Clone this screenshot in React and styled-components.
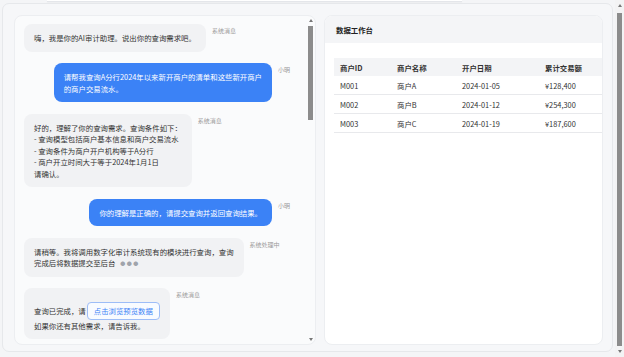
import React from 'react';
import styled, {createGlobalStyle} from 'styled-components';

const GlobalStyle = createGlobalStyle`
  html {
    overflow-y: scroll;
  }
  body {
    margin: 0;
    background: #f4f5f7;
    font-family: "Noto Sans CJK SC", "Noto Sans", sans-serif;
    color: #333;
  }
`

const Page = styled.div`
  display: grid;
  grid-template-columns: 615px 9px;
  height: 357px;
  overflow: hidden;
`

const PageMain = styled.div`
  min-width: 0;
`

// scrollbars are drawn by hand, the browser hides its own in the screenshot
const ScrollTrack = styled.div`
  width: 9px;
  height: ${p => p.$h}px;
  display: flex;
  flex-direction: column;
  align-items: center;
  background: ${p => p.$bg || 'transparent'};
`

const ArrowBox = styled.div`
  height: ${p => p.$h}px;
  width: 100%;
  flex: none;
  display: flex;
  align-items: center;
  justify-content: center;
`

const Arrow = styled.span`
  width: 0;
  height: 0;
  border-left: 2.5px solid transparent;
  border-right: 2.5px solid transparent;
  ${p => p.$down ? 'border-top' : 'border-bottom'}: 3px solid #777;
`

const Thumb = styled.div`
  width: 5px;
  flex: none;
  height: ${p => p.$h}px;
  margin-top: ${p => p.$top}px;
  background: #8c8c8c;
`

const Spacer = styled.div`
  flex: 1;
`

const TopStrip = styled.div`
  margin-left: 47px;
  width: 415px;
  height: 1px;
  background: #fff;
  border-bottom: 1px solid #e4e6ea;
  box-shadow: 0 1px 2px rgba(0, 0, 0, 0.04);
`

const Shell = styled.div`
  margin: 1px 2px 0 2px;
  border: 1px solid #e6e8eb;
  border-radius: 7px;
  background: #f6f7f9;
  padding: 11px 9px 6px 11px;
  display: grid;
  grid-template-columns: 302px 279px;
  gap: 8px;
`

const Panel = styled.section`
  height: 330px;
  box-sizing: border-box;
  border: 1px solid #eceef1;
  border-radius: 8px;
  background: ${p => p.$bg};
  overflow: hidden;
  display: flex;
  flex-direction: ${p => p.$row ? 'row' : 'column'};
`

const Thread = styled.div`
  flex: 1;
  overflow: hidden;
  padding: 8px 16px 8px 9px;
  display: flex;
  flex-direction: column;
  gap: 11.5px;
`

const Row = styled.div`
  display: flex;
  justify-content: ${p => p.$mine ? 'flex-end' : 'flex-start'};
  align-items: flex-start;
  gap: 6px;
`

const Bubble = styled.div`
  background: ${p => p.$mine ? '#3b82f6' : '#f1f2f4'};
  color: ${p => p.$mine ? '#fff' : '#333'};
  border-radius: 8px;
  padding: 8px 10px;
  font-size: 7.4px;
  line-height: 11.5px;
  white-space: nowrap;
`

const Sender = styled.span`
  font-size: 6px;
  line-height: 8px;
  margin-top: 3px;
  color: #9a9a9a;
  white-space: nowrap;
`

const Dots = styled.span`
  margin-left: 5px;
  font-size: 5px;
  letter-spacing: 1.5px;
  color: #a0a4ab;
  vertical-align: 1px;
`

const PreviewButton = styled.button`
  display: inline-block;
  margin: 6px 0 0 1px;
  padding: 2px 6px;
  font: inherit;
  font-size: 7.4px;
  line-height: 11.5px;
  color: #3b82f6;
  background: #f8fbff;
  border: 1px solid #9dbdf7;
  border-radius: 4px;
  cursor: pointer;
`

const PanelHeader = styled.header`
  height: 27px;
  flex: none;
  background: #f4f5f7;
  padding-left: 11px;
  display: flex;
  align-items: center;
  font-size: 7.4px;
  font-weight: 700;
  color: #222;
`

const PanelBody = styled.div`
  padding: 15px 9px;
`

const Table = styled.table`
  border-collapse: collapse;
  width: 259px;
  font-size: 7.4px;
  color: #333;
  table-layout: fixed;
`

const Th = styled.th`
  width: ${p => p.$w}px;
  text-align: left;
  font-weight: 700;
  background: #f3f4f6;
  height: 18px;
  padding: 0 0 0 6px;
`

const Td = styled.td`
  height: 18px;
  padding: 0 0 0 6px;
  border-bottom: 1px solid #e8e9ec;
`

const messages = [
    {from: '系统消息', lines: ['嗨，我是你的AI审计助理。说出你的查询需求吧。']},
    {from: '小明', mine: true, lines: ['请帮我查询A分行2024年以来新开商户的清单和这些新开商户', '的商户交易流水。']},
    {
        from: '系统消息', lines: [
            '好的，理解了你的查询需求。查询条件如下：',
            '- 查询模型包括商户基本信息和商户交易流水',
            '- 查询条件为商户开户机构等于A分行',
            '- 商户开立时间大于等于2024年1月1日',
            '请确认。'
        ]
    },
    {from: '小明', mine: true, lines: ['你的理解是正确的，请提交查询并返回查询结果。']},
    {from: '系统处理中', loading: true, lines: ['请稍等。我将调用数字化审计系统现有的模块进行查询，查询', '完成后将数据提交至后台']},
    {from: '系统消息', preview: true, lines: ['查询已完成，请', '如果你还有其他需求，请告诉我。']},
]

const merchants = [
    {id: 'M001', name: '商户A', date: '2024-01-05', total: '¥128,400'},
    {id: 'M002', name: '商户B', date: '2024-01-12', total: '¥254,300'},
    {id: 'M003', name: '商户C', date: '2024-01-19', total: '¥187,600'},
]

function Message({msg}) {
    let body
    if (msg.preview) {
        body = <>
            {msg.lines[0]}<PreviewButton>点击浏览预览数据</PreviewButton><br/>
            {msg.lines[1]}
        </>
    } else {
        body = msg.lines.map((line, i) => (
            <React.Fragment key={i}>
                {i > 0 ? <br/> : null}
                {line}
                {msg.loading && i === msg.lines.length - 1 ? <Dots>●●●</Dots> : null}
            </React.Fragment>
        ))
    }
    return (
        <Row $mine={msg.mine}>
            <Bubble $mine={msg.mine}>{body}</Bubble>
            <Sender>{msg.from}</Sender>
        </Row>
    )
}

function Scrollbar({height, thumbTop, thumbHeight, bg, arrowH}) {
    return (
        <ScrollTrack $h={height} $bg={bg}>
            <ArrowBox $h={arrowH}><Arrow/></ArrowBox>
            <Thumb $top={thumbTop} $h={thumbHeight}/>
            <Spacer/>
            <ArrowBox $h={arrowH}><Arrow $down/></ArrowBox>
        </ScrollTrack>
    )
}

export default function App() {
    return (
        <>
            <GlobalStyle/>
            <Page>
                <PageMain>
                    <TopStrip/>
                    <Shell>
                        <Panel $bg="#fafbfc" $row>
                            <Thread>
                                {messages.map((m, i) => <Message key={i} msg={m}/>)}
                            </Thread>
                            <Scrollbar height={328} thumbTop={1} thumbHeight={94} arrowH={9}/>
                        </Panel>
                        <Panel $bg="#fff">
                            <PanelHeader>数据工作台</PanelHeader>
                            <PanelBody>
                                <Table>
                                    <thead>
                                    <tr>
                                        <Th $w={51}>商户ID</Th>
                                        <Th $w={59}>商户名称</Th>
                                        <Th $w={77}>开户日期</Th>
                                        <Th $w={72}>累计交易额</Th>
                                    </tr>
                                    </thead>
                                    <tbody>
                                    {merchants.map(m => (
                                        <tr key={m.id}>
                                            <Td>{m.id}</Td>
                                            <Td>{m.name}</Td>
                                            <Td>{m.date}</Td>
                                            <Td>{m.total}</Td>
                                        </tr>
                                    ))}
                                    </tbody>
                                </Table>
                            </PanelBody>
                        </Panel>
                    </Shell>
                </PageMain>
                <Scrollbar height={357} thumbTop={2} thumbHeight={333} bg="#f3f3f4" arrowH={11}/>
            </Page>
        </>
    )
}
